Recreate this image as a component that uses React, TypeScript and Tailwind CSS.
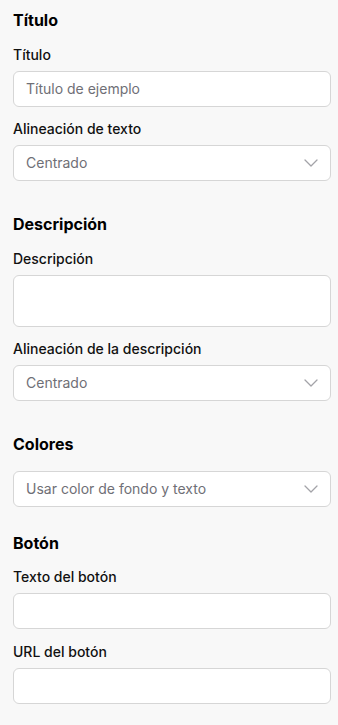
import React from 'react';

const font = {fontFamily: 'Inter, "Noto Sans", sans-serif'};

function Label({children}: {children: React.ReactNode}) {
  return <div className="mb-1.5 text-sm leading-5 font-medium text-[#111111]">{children}</div>;
}

function Heading({children, className = ''}: {children: React.ReactNode; className?: string}) {
  return <h2 className={`text-base leading-6 font-bold text-black ${className}`}>{children}</h2>;
}

function TextInput({placeholder = '', tall = false}: {placeholder?: string; tall?: boolean}) {
  return (
    <div
      className={`w-full rounded-md border border-[#d6d6d6] bg-white px-3 flex items-center text-sm text-[#6f6f76] ${
        tall ? 'h-[52px]' : 'h-9'
      }`}
    >
      {placeholder}
    </div>
  );
}

function Select({value}: {value: string}) {
  return (
    <div className="w-full h-9 rounded-md border border-[#d6d6d6] bg-white pl-3 pr-3 flex items-center justify-between text-sm text-[#6f6f76]">
      <span>{value}</span>
      <svg width="14" height="8" viewBox="0 0 14 8" fill="none">
        <path d="M1 1l6 6 6-6" stroke="#a3a3a8" strokeWidth="1.3" strokeLinecap="round" strokeLinejoin="round" />
      </svg>
    </div>
  );
}

export default function App() {
  return (
    <div className="min-h-[725px] w-[338px] bg-[#f8f8f8]" style={font}>
      <div className="w-[318px] ml-[13px] pt-2">
        <section>
          <Heading className="mb-[13px]">Título</Heading>
          <Label>Título</Label>
          <TextInput placeholder="Título de ejemplo" />
          <div className="mt-3">
            <Label>Alineación de texto</Label>
            <Select value="Centrado" />
          </div>
        </section>

        <section className="mt-[31px]">
          <Heading className="mb-[13px]">Descripción</Heading>
          <Label>Descripción</Label>
          <TextInput tall />
          <div className="mt-3">
            <Label>Alineación de la descripción</Label>
            <Select value="Centrado" />
          </div>
        </section>

        <section className="mt-[31px]">
          <Heading className="mb-[15px]">Colores</Heading>
          <Select value="Usar color de fondo y texto" />
        </section>

        <section className="mt-6">
          <Heading className="mb-3">Botón</Heading>
          <Label>Texto del botón</Label>
          <TextInput />
          <div className="mt-[13px]">
            <Label>URL del botón</Label>
            <TextInput />
          </div>
        </section>
      </div>
    </div>
  );
}
